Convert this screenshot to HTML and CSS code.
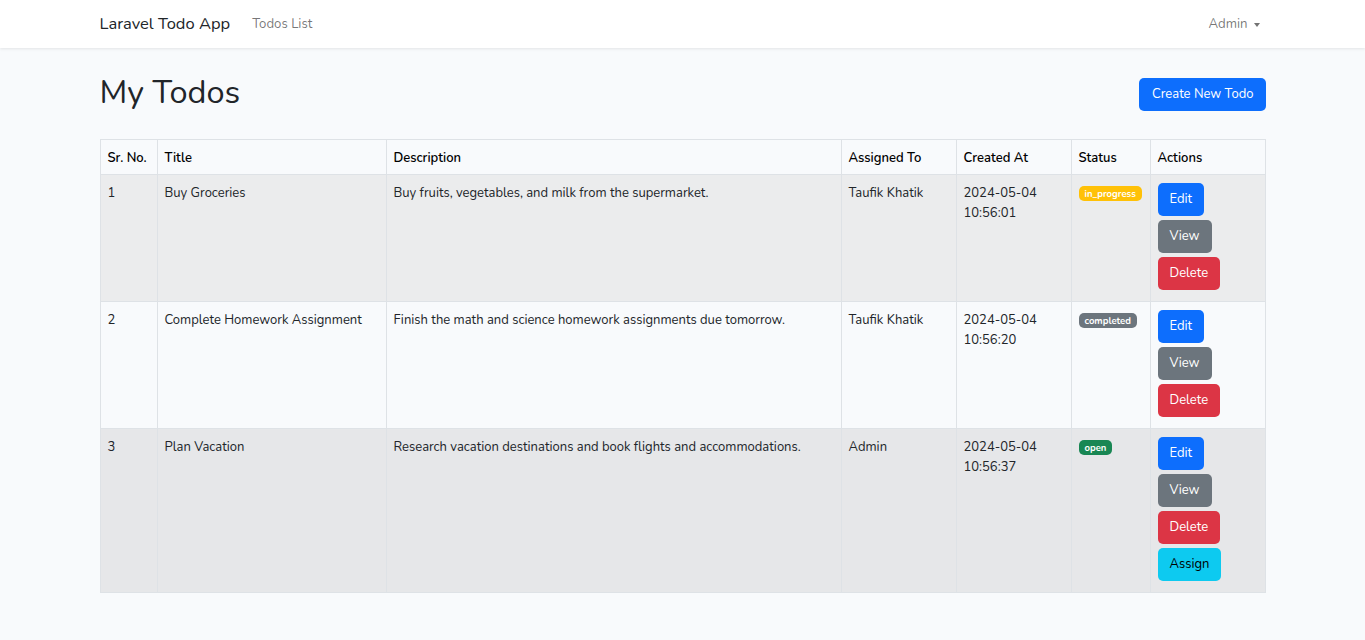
FILE: index.html
```html
<!DOCTYPE html>
<html lang="en">
<head>
<meta charset="utf-8">
<title>Laravel Todo App</title>
<link rel="stylesheet" href="styles.css">
</head>
<body>
<nav class="navbar">
  <div class="container nav-inner">
    <a class="brand" href="#">Laravel Todo App</a>
    <a class="nav-link" href="#">Todos List</a>
    <span class="spacer"></span>
    <a class="nav-link dropdown" href="#">Admin<span class="caret"></span></a>
  </div>
</nav>
<main class="container main">
  <div class="page-head">
    <h1 class="title">My Todos</h1>
    <a class="btn btn-primary" href="#">Create New Todo</a>
  </div>
  <table class="table">
    <colgroup>
      <col class="c1"><col class="c2"><col class="c3"><col class="c4"><col class="c5"><col class="c6"><col class="c7">
    </colgroup>
    <thead>
      <tr><th>Sr. No.</th><th>Title</th><th>Description</th><th>Assigned To</th><th>Created At</th><th>Status</th><th>Actions</th></tr>
    </thead>
    <tbody>
      <tr class="odd">
        <td>1</td><td>Buy Groceries</td><td>Buy fruits, vegetables, and milk from the supermarket.</td><td>Taufik Khatik</td><td>2024-05-04<br>10:56:01</td>
        <td><span class="badge bg-warning">in_progress</span></td>
        <td><div class="actions"><a class="btn btn-primary" href="#">Edit</a><a class="btn btn-secondary" href="#">View</a><a class="btn btn-danger" href="#">Delete</a></div></td>
      </tr>
      <tr>
        <td>2</td><td>Complete Homework Assignment</td><td>Finish the math and science homework assignments due tomorrow.</td><td>Taufik Khatik</td><td>2024-05-04<br>10:56:20</td>
        <td><span class="badge bg-secondary">completed</span></td>
        <td><div class="actions"><a class="btn btn-primary" href="#">Edit</a><a class="btn btn-secondary" href="#">View</a><a class="btn btn-danger" href="#">Delete</a></div></td>
      </tr>
      <tr class="odd odd3">
        <td>3</td><td>Plan Vacation</td><td>Research vacation destinations and book flights and accommodations.</td><td>Admin</td><td>2024-05-04<br>10:56:37</td>
        <td><span class="badge bg-success">open</span></td>
        <td><div class="actions"><a class="btn btn-primary" href="#">Edit</a><a class="btn btn-secondary" href="#">View</a><a class="btn btn-danger" href="#">Delete</a><a class="btn btn-info" href="#">Assign</a></div></td>
      </tr>
    </tbody>
  </table>
</main>
</body>
</html>
```
FILE: styles.css
```css
* { box-sizing: border-box; }
body {
  margin: 0;
  background: #f8fafc;
  color: #212529;
  font-family: "Nunito", Lato, "Noto Sans", sans-serif;
  font-size: 13px;
  line-height: 1.5;
}
a { text-decoration: none; }
.container {
  width: 1190px;
  margin: 0 auto;
  padding: 0 12px;
}
.navbar {
  background: #fff;
  height: 48px;
  box-shadow: 0 1px 3px rgba(0,0,0,.09);
}
.nav-inner {
  display: flex;
  align-items: center;
  height: 48px;
}
.brand {
  color: #212529;
  font-size: 16.5px;
  margin-right: 22px;
}
.nav-link {
  color: rgba(0,0,0,.55);
  font-size: 13.2px;
  position: relative;
  top: 1px;
}
.spacer { flex: 1; }
.dropdown { margin-right: 6px; display: flex; align-items: center; }
.caret {
  display: inline-block;
  margin-left: 6px;
  border-top: 4px solid rgba(0,0,0,.55);
  border-left: 3.5px solid transparent;
  border-right: 3.5px solid transparent;
}
.main { padding-top: 24px; }
.page-head {
  display: flex;
  justify-content: space-between;
  align-items: center;
  margin-bottom: 23px;
}
.title {
  margin: 0;
  font-weight: 400;
  font-size: 32.5px;
  line-height: 44px;
  position: relative;
  top: -2px;
}
.btn {
  display: inline-block;
  padding: 5px 11px;
  font-size: 13px;
  line-height: 21px;
  border-radius: 5px;
  color: #fff;
  border: 1px solid transparent;
}
.btn-primary { background: #0d6efd; }
.btn-secondary { background: #6c757d; }
.btn-danger { background: #dc3545; }
.btn-info { background: #0dcaf0; color: #000; }
.page-head .btn { padding: 5px 11px 5px 12px; }
.table {
  width: 1165px;
  border-collapse: collapse;
  table-layout: fixed;
}
.c1 { width: 57px; } .c2 { width: 229px; } .c3 { width: 455px; }
.c4 { width: 115px; } .c5 { width: 115px; } .c6 { width: 79px; } .c7 { width: 115px; }
.table th, .table td {
  border: 1px solid #dee2e6;
  padding: 9px 7px 8px 7px;
  text-align: left;
  vertical-align: top;
}
.table th { font-weight: 600; color: #000; padding-top: 8px; padding-bottom: 6px; line-height: 20px; }
.table td { font-size: 13px; }
.table tr.odd td { background: #ebeced; }
.table tr.odd3 td { background: #e6e7e9; }
.badge {
  display: inline-block;
  margin-top: 2px;
  padding: 2px 6px;
  font-size: 9.5px;
  font-weight: 700;
  line-height: 11px;
  color: #fff;
  border-radius: 5px;
  vertical-align: top;
}
.bg-warning { background: #ffc107; }
.bg-secondary { background: #6c757d; }
.bg-success { background: #198754; }
.actions {
  display: flex;
  flex-direction: column;
  align-items: flex-start;
  gap: 4px;
  margin-top: -1px;
  padding-bottom: 3px;
}
```
